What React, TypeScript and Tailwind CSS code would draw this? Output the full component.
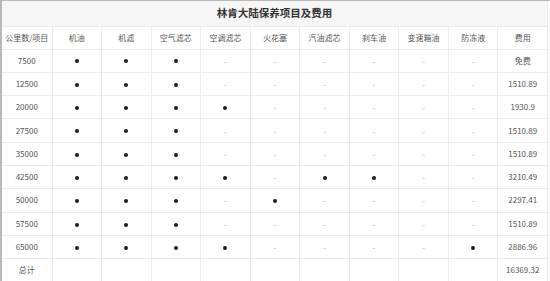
import React from "react";

const headers = ["公里数/项目", "机油", "机滤", "空气滤芯", "空调滤芯", "火花塞", "汽油滤芯", "刹车油", "变速箱油", "防冻液", "费用"];

const data: { km: string; marks: number[]; fee: string }[] = [
  { km: "7500", marks: [1, 1, 1, 0, 0, 0, 0, 0, 0], fee: "免费" },
  { km: "12500", marks: [1, 1, 1, 0, 0, 0, 0, 0, 0], fee: "1510.89" },
  { km: "20000", marks: [1, 1, 1, 1, 0, 0, 0, 0, 0], fee: "1930.9" },
  { km: "27500", marks: [1, 1, 1, 0, 0, 0, 0, 0, 0], fee: "1510.89" },
  { km: "35000", marks: [1, 1, 1, 0, 0, 0, 0, 0, 0], fee: "1510.89" },
  { km: "42500", marks: [1, 1, 1, 1, 0, 1, 1, 0, 0], fee: "3210.49" },
  { km: "50000", marks: [1, 1, 1, 0, 1, 0, 0, 0, 0], fee: "2297.41" },
  { km: "57500", marks: [1, 1, 1, 0, 0, 0, 0, 0, 0], fee: "1510.89" },
  { km: "65000", marks: [1, 1, 1, 1, 0, 0, 0, 0, 1], fee: "2886.96" },
];

const font = { fontFamily: '"Noto Sans CJK SC", "Noto Sans", sans-serif' };

export default function App() {
  return (
    <div className="w-[550px] h-[281px] overflow-hidden bg-white border-t border-l-2 border-[#b8b8b8]" style={font}>
      <table className="w-[546px] table-fixed border-collapse text-[8px] text-[#555]">
        <colgroup>
          <col className="w-[50px]" />
          {Array.from({ length: 10 }).map((_, i) => (
            <col key={i} />
          ))}
        </colgroup>
        <tbody>
          <tr className="h-[25px] bg-[#f6f6f6]">
            <td colSpan={11} className="text-center font-bold text-[10.5px] text-[#333] border-b border-r border-[#ebebeb]">
              林肯大陆保养项目及费用
            </td>
          </tr>
          <tr className="h-[23px]">
            {headers.map((h, i) => (
              <td key={i} className="text-center border border-[#ebebeb] border-l-0">
                {h}
              </td>
            ))}
          </tr>
          {data.map((r) => (
            <tr key={r.km} className="h-[23.3px]">
              <td className="text-center border border-[#ebebeb] border-l-0">{r.km}</td>
              {r.marks.map((m, i) => (
                <td key={i} className="text-center border border-[#ebebeb]">
                  {m ? (
                    <span className="inline-block w-[4px] h-[4px] rounded-full bg-[#1a1a2a] align-middle" />
                  ) : (
                    <span className="text-[#999] text-[7px]">-</span>
                  )}
                </td>
              ))}
              <td className="text-center border border-[#ebebeb]">{r.fee}</td>
            </tr>
          ))}
          <tr className="h-[23.3px]">
            <td className="text-center border border-[#ebebeb] border-l-0">总计</td>
            {Array.from({ length: 9 }).map((_, i) => (
              <td key={i} className="border border-[#ebebeb]" />
            ))}
            <td className="text-center border border-[#ebebeb]">16369.32</td>
          </tr>
        </tbody>
      </table>
    </div>
  );
}
